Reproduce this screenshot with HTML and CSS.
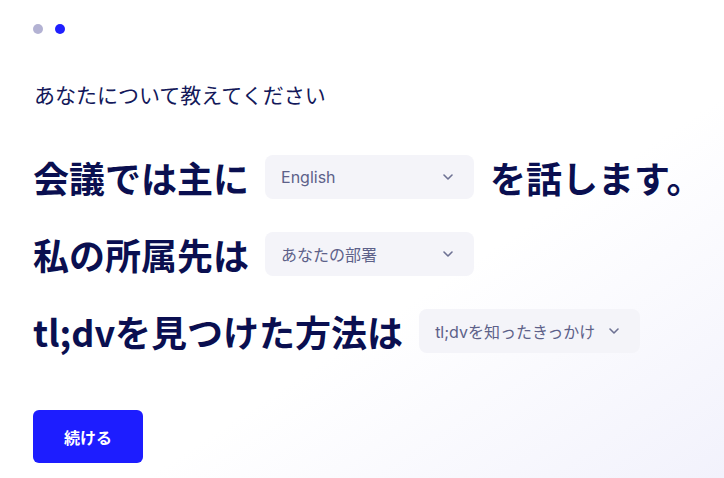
FILE: index.html
```html
<!DOCTYPE html>
<html lang="ja">
<head>
    <meta charset="UTF-8">
    <meta name="viewport" content="width=device-width, initial-scale=1.0">
    <title>tl;dv</title>
    <link rel="stylesheet" href="styles.css">
</head>
<body>
    <div class="page">
        <div class="steps">
            <span class="dot"></span>
            <span class="dot active"></span>
        </div>

        <p class="intro">あなたについて教えてください</p>

        <div class="row">
            <span class="label">会議では主に</span>
            <div class="select">
                <span>English</span>
                <svg class="chevron" width="10" height="6" viewBox="0 0 10 6"><path d="M1 1l4 4 4-4" fill="none" stroke="currentColor" stroke-width="1.6" stroke-linecap="round" stroke-linejoin="round"/></svg>
            </div>
            <span class="label">を話します。</span>
        </div>

        <div class="row">
            <span class="label">私の所属先は</span>
            <div class="select">
                <span>あなたの部署</span>
                <svg class="chevron" width="10" height="6" viewBox="0 0 10 6"><path d="M1 1l4 4 4-4" fill="none" stroke="currentColor" stroke-width="1.6" stroke-linecap="round" stroke-linejoin="round"/></svg>
            </div>
        </div>

        <div class="row">
            <span class="label">tl;dvを見つけた方法は</span>
            <div class="select">
                <span>tl;dvを知ったきっかけ</span>
                <svg class="chevron" width="10" height="6" viewBox="0 0 10 6"><path d="M1 1l4 4 4-4" fill="none" stroke="currentColor" stroke-width="1.6" stroke-linecap="round" stroke-linejoin="round"/></svg>
            </div>
        </div>

        <button class="next">続ける</button>
    </div>
</body>
</html>
```

FILE: styles.css
```css
html, body {
    height: 100%;
}

body {
    margin: 0;
    font-family: Inter, "Noto Sans CJK JP", sans-serif;
    color: #0b1052;
    background: linear-gradient(to bottom right, #ffffff 60%, #f2f2fc 100%);
}

.page {
    padding: 24px 33px 0;
}

.steps {
    display: flex;
    gap: 12px;
}

.dot {
    width: 10px;
    height: 10px;
    border-radius: 50%;
    background-color: #b3b2d3;
}

.dot.active {
    background-color: #1f1fff;
}

.intro {
    margin: 46px 0 47px 1px;
    font-family: "Noto Sans CJK JP", sans-serif;
    font-size: 21px;
    line-height: 28px;
    color: #13185a;
}

.row {
    display: flex;
    align-items: center;
    gap: 16px;
    height: 44px;
    margin-bottom: 33px;
}

.label {
    font-family: "Noto Sans CJK JP", sans-serif;
    font-size: 36px;
    font-weight: 700;
    line-height: 44px;
    color: #0a0f50;
    white-space: nowrap;
}

.select {
    box-sizing: border-box;
    display: flex;
    align-items: center;
    justify-content: space-between;
    gap: 14px;
    min-width: 209px;
    height: 44px;
    padding: 0 21px 0 16px;
    background-color: #f4f4f9;
    border-radius: 8px;
    font-family: Inter, "Noto Sans CJK JP", sans-serif;
    font-size: 16px;
    color: #5d6189;
    white-space: nowrap;
}

.chevron {
    color: #6d7193;
    flex-shrink: 0;
}

.next {
    margin-top: 24px;
    height: 53px;
    padding: 0 31px;
    border: none;
    border-radius: 6px;
    background-color: #1d1dff;
    color: white;
    font-family: "Noto Sans CJK JP", sans-serif;
    font-size: 16px;
    font-weight: 700;
    cursor: pointer;
}
```
